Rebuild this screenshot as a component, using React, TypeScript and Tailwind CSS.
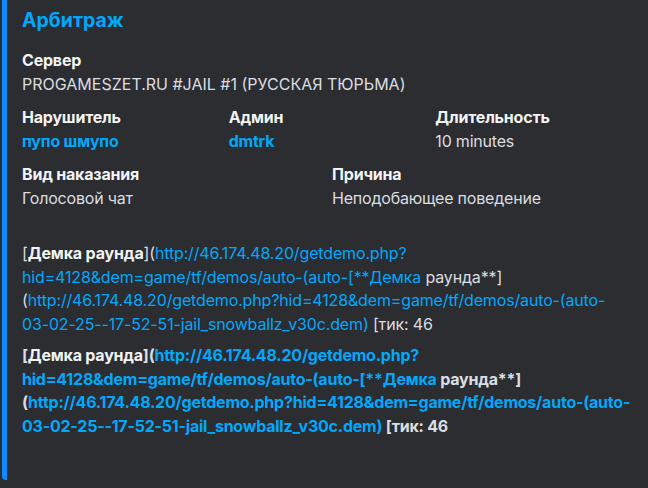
import React from "react";

const W = ({ children }: { children: React.ReactNode }) => (
  <span className="text-[#dbdee1]">{children}</span>
);
const L = ({ children }: { children: React.ReactNode }) => (
  <span className="text-[#00a8fc]">{children}</span>
);

function Field({
  name,
  value,
  link,
  caps,
}: {
  name: string;
  value: string;
  link?: boolean;
  caps?: boolean;
}) {
  return (
    <div className="flex flex-col">
      <div className="text-[16px] leading-[24px] font-bold tracking-[-0.2px] text-[#f2f3f5]">{name}</div>
      <div
        className={
          link
            ? "text-[16px] leading-[24px] font-bold tracking-[-0.2px] text-[#00a8fc]"
            : caps
            ? "text-[16px] leading-[24px] text-[#dbdee1]"
            : "text-[16px] leading-[24px] tracking-[-0.2px] text-[#dbdee1]"
        }
      >
        {value}
      </div>
    </div>
  );
}

function Para({ bold }: { bold?: boolean }) {
  const lines = [
    <>
      <W>[</W>
      <span className="font-bold text-[#f2f3f5]">Демка раунда</span>
      <W>](</W>
      <L>http://46.174.48.20/getdemo.php?</L>
    </>,
    <>
      <L>hid=4128&amp;dem=game/tf/demos/auto-(auto-[**Демка</L>
      <W> раунда**]</W>
    </>,
    <>
      <W>(</W>
      <L>http://46.174.48.20/getdemo.php?hid=4128&amp;dem=game/tf/demos/auto-(auto-</L>
    </>,
    <>
      <L>03-02-25--17-52-51-jail_snowballz_v30c.dem)</L>
      <W> [тик: 46</W>
    </>,
  ];
  return (
    <div className={bold ? "font-bold tracking-[-0.22px]" : "tracking-[-0.15px]"}>
      {lines.map((l, i) => (
        <div key={i} className="whitespace-nowrap text-[16px] leading-[23.5px]">
          {l}
        </div>
      ))}
    </div>
  );
}

export default function App() {
  return (
    <div className="min-h-screen w-full bg-[#2b2d31] font-['Inter',sans-serif]">
      <div className="ml-[2px] h-[480px] rounded-bl-[4px] border-l-[5px] border-[#0a8cff] pl-[15px] pr-[16px] pt-[8px]">
        <div className="text-[19.5px] leading-[24px] font-bold text-[#00a8fc]">Арбитраж</div>
        <div className="mt-[16px] grid grid-cols-12 gap-x-[10px] gap-y-[9px]">
          <div className="col-span-12">
            <Field name="Сервер" value="PROGAMESZET.RU #JAIL #1 (РУССКАЯ ТЮРЬМА)" caps />
          </div>
          <div className="col-span-4">
            <Field name="Нарушитель" value="пупо шмупо" link />
          </div>
          <div className="col-span-4">
            <Field name="Админ" value="dmtrk" link />
          </div>
          <div className="col-span-4">
            <Field name="Длительность" value="10 minutes" />
          </div>
          <div className="col-span-6">
            <Field name="Вид наказания" value="Голосовой чат" />
          </div>
          <div className="col-span-6">
            <Field name="Причина" value="Неподобающее поведение" />
          </div>
        </div>
        <div className="mt-[32px] flex flex-col gap-[8px]">
          <Para />
          <Para bold />
        </div>
      </div>
    </div>
  );
}
